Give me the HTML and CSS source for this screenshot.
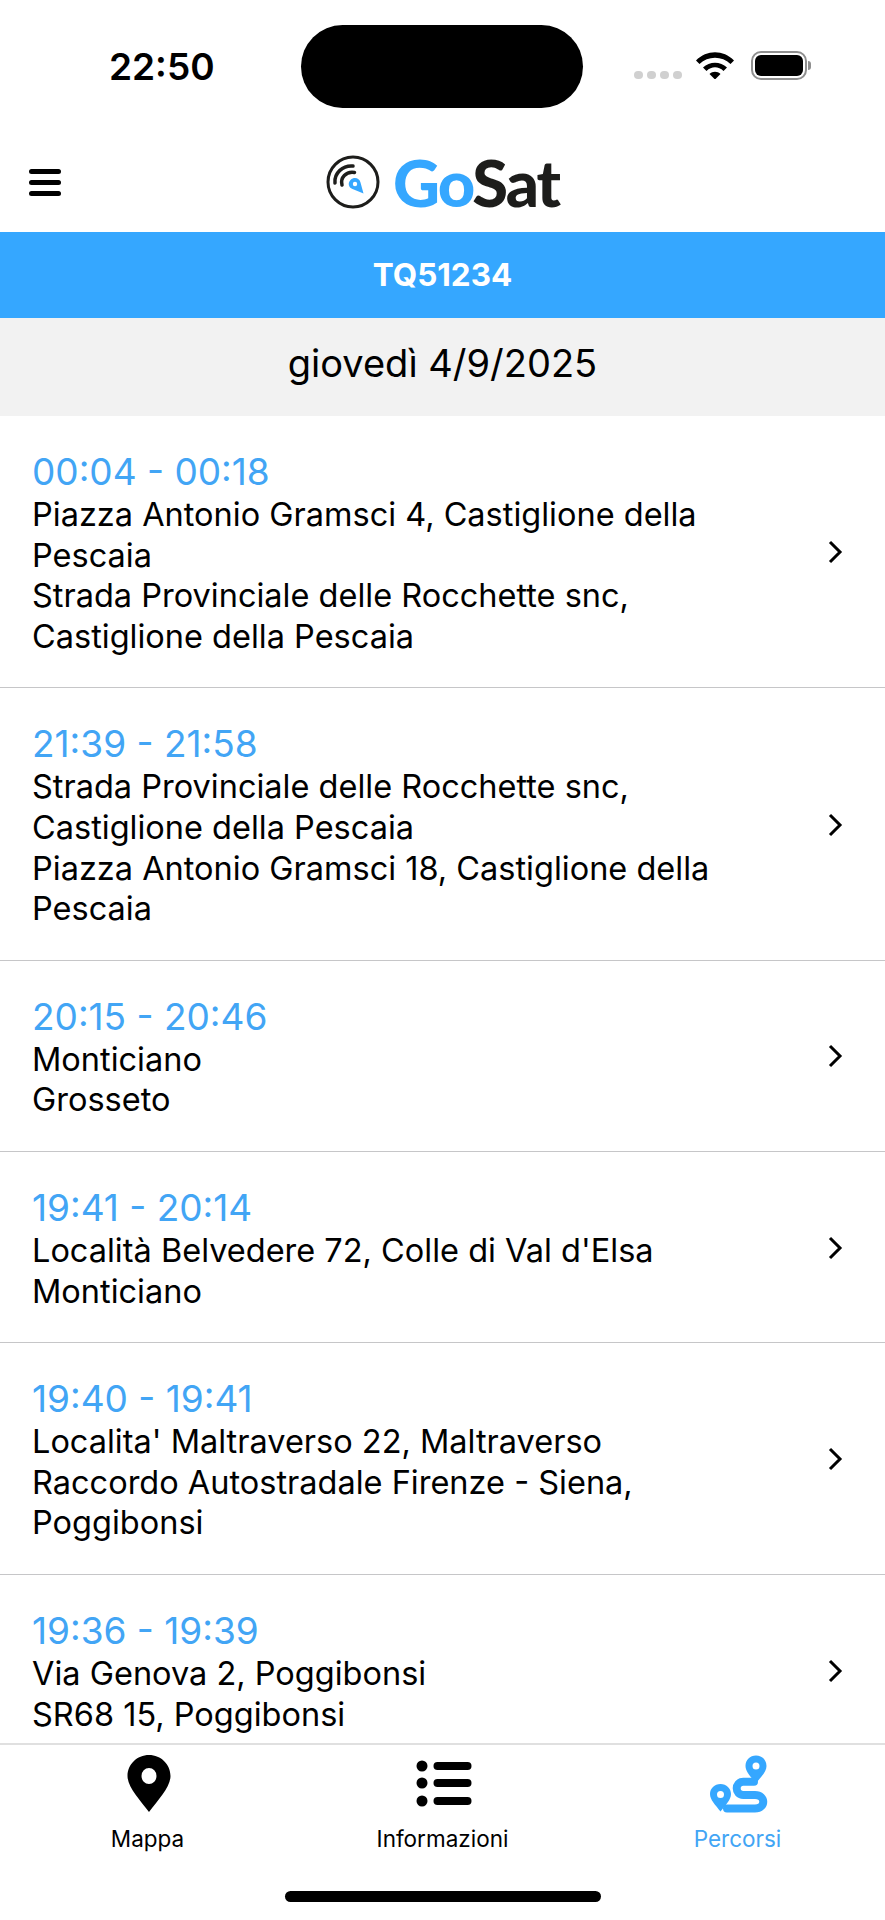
FILE: index.html
```html
<!DOCTYPE html>
<html>
<head>
    <title>GoSat - Percorsi</title>
    <link rel="stylesheet" href="styles.css">
</head>
<body>
    <div id="app">
        <div id="statusBar">
            <div class="clock">22:50</div>
            <div class="island"></div>
            <div class="statusIcons">
                <div class="signal"><span></span><span></span><span></span><span></span></div>
                <svg class="wifi" width="38" height="28" viewBox="0 0 38 28">
                    <path d="M0 9.500C10.500 -1.500 27.500 -1.500 38 9.500L34.500 13C26 4.500 12 4.500 3.500 13Z"/>
                    <path d="M7 16.500C13.500 10 24.500 10 31 16.500L27.500 20C22.500 15 15.500 15 10.500 20Z"/>
                    <path d="M13.500 23C16.500 20 21.500 20 24.500 23L19 28.500Z"/>
                </svg>
                <div class="battery"><div class="batteryFill"></div></div>
                <div class="batteryCap"></div>
            </div>
        </div>

        <div id="header">
            <div class="menuIcon"><span></span><span></span><span></span></div>
            <div class="logo">
                <svg class="logoMark" width="54" height="54" viewBox="0 0 54 54">
                    <circle cx="27" cy="27" r="25" fill="none" stroke="#1d1d1b" stroke-width="3"/>
                    <path d="M9 28C8 18 17 10 27 11" fill="none" stroke="#1d1d1b" stroke-width="3.500" stroke-linecap="round"/>
                    <path d="M16 30C14 23 20 16 28.500 17.500" fill="none" stroke="#1d1d1b" stroke-width="3.500" stroke-linecap="round"/>
                    <path d="M24.500 25C28 21.500 33.500 23 34.500 27.500L37.500 38.500L26.500 34C22.500 32.500 21.500 28 24.500 25Z" fill="#35a7ff"/>
                    <circle cx="29" cy="29" r="2.200" fill="#fff"/>
                </svg>
                <span class="logoText"><span class="go">Go</span>Sat</span>
            </div>
        </div>

        <div id="plateBar">TQ51234</div>
        <div id="dateBar">giovedì 4/9/2025</div>

        <div id="tripList">
            <div class="trip">
                <div class="tripText">
                    <div class="time">00:04 - 00:18</div>
                    <div class="place">Piazza Antonio Gramsci 4, Castiglione della Pescaia</div>
                    <div class="place">Strada Provinciale delle Rocchette snc, Castiglione della Pescaia</div>
                </div>
                <svg class="chevron" width="16" height="24" viewBox="0 0 16 24"><path d="M3 2L13 12L3 22"/></svg>
            </div>
            <div class="trip">
                <div class="tripText">
                    <div class="time">21:39 - 21:58</div>
                    <div class="place">Strada Provinciale delle Rocchette snc, Castiglione della Pescaia</div>
                    <div class="place">Piazza Antonio Gramsci 18, Castiglione della Pescaia</div>
                </div>
                <svg class="chevron" width="16" height="24" viewBox="0 0 16 24"><path d="M3 2L13 12L3 22"/></svg>
            </div>
            <div class="trip">
                <div class="tripText">
                    <div class="time">20:15 - 20:46</div>
                    <div class="place">Monticiano</div>
                    <div class="place">Grosseto</div>
                </div>
                <svg class="chevron" width="16" height="24" viewBox="0 0 16 24"><path d="M3 2L13 12L3 22"/></svg>
            </div>
            <div class="trip">
                <div class="tripText">
                    <div class="time">19:41 - 20:14</div>
                    <div class="place">Località Belvedere 72, Colle di Val d'Elsa</div>
                    <div class="place">Monticiano</div>
                </div>
                <svg class="chevron" width="16" height="24" viewBox="0 0 16 24"><path d="M3 2L13 12L3 22"/></svg>
            </div>
            <div class="trip">
                <div class="tripText">
                    <div class="time">19:40 - 19:41</div>
                    <div class="place">Localita' Maltraverso 22, Maltraverso</div>
                    <div class="place">Raccordo Autostradale Firenze - Siena, Poggibonsi</div>
                </div>
                <svg class="chevron" width="16" height="24" viewBox="0 0 16 24"><path d="M3 2L13 12L3 22"/></svg>
            </div>
            <div class="trip">
                <div class="tripText">
                    <div class="time">19:36 - 19:39</div>
                    <div class="place">Via Genova 2, Poggibonsi</div>
                    <div class="place">SR68 15, Poggibonsi</div>
                </div>
                <svg class="chevron" width="16" height="24" viewBox="0 0 16 24"><path d="M3 2L13 12L3 22"/></svg>
            </div>
        </div>

        <div id="tabBar">
            <div class="tab">
                <svg class="tabIcon" width="64" height="60" viewBox="0 0 64 60">
                    <path fill-rule="evenodd" d="M33 2C45 2 54.500 11.500 54.500 23C54.500 34 42 47 33 59C24 47 11.500 34 11.500 23C11.500 11.500 21 2 33 2ZM33 15A7.500 8 0 1 0 33 31A7.500 8 0 1 0 33 15Z"/>
                </svg>
                <span>Mappa</span>
            </div>
            <div class="tab">
                <svg class="tabIcon" width="64" height="60" viewBox="0 0 64 60">
                    <circle cx="11" cy="13" r="5.500"/>
                    <circle cx="11" cy="30" r="5.500"/>
                    <circle cx="11" cy="48" r="5.500"/>
                    <rect x="22.500" y="9" width="38" height="8" rx="4"/>
                    <rect x="22.500" y="26" width="38" height="8" rx="4"/>
                    <rect x="22.500" y="44" width="38" height="8" rx="4"/>
                </svg>
                <span>Informazioni</span>
            </div>
            <div class="tab active">
                <svg class="tabIcon" width="64" height="60" viewBox="0 0 64 60">
                    <path fill-rule="evenodd" d="M50 2.500C56 2.500 60.500 7 60.500 13C60.500 19 55 24 50 30C45 24 39.500 19 39.500 13C39.500 7 44 2.500 50 2.500ZM50 9.500A3.500 3.500 0 1 0 50 16.500A3.500 3.500 0 1 0 50 9.500Z"/>
                    <path fill-rule="evenodd" d="M14.500 31C20.500 31 25 35.500 25 41C25 47 19.500 52 14.500 58.500C9.500 52 4 47 4 41C4 35.500 8.500 31 14.500 31ZM14.500 38A3.500 3.500 0 1 0 14.500 45A3.500 3.500 0 1 0 14.500 38Z"/>
                    <path class="routeLine" d="M48 28.700H37.300C28.500 28.700 28.500 42 37.300 42H49C60 42 60 55.500 49 55.500H21"/>
                </svg>
                <span>Percorsi</span>
            </div>
        </div>

        <div id="homeArea"><div class="homeBar"></div></div>
    </div>
</body>
</html>
```

FILE: styles.css
```css
html, body {
    padding: 0;
    margin: 0;
    font-family: Inter, "Liberation Sans", sans-serif;
    background: white;
}
#app {
    width: 885px;
    height: 1920px;
    display: flex;
    flex-direction: column;
    overflow: hidden;
}

/* status bar */
#statusBar {
    height: 133px;
    flex-shrink: 0;
    box-sizing: border-box;
    padding: 25px 0 0 109px;
    display: flex;
    flex-direction: row;
    align-items: flex-start;
}
.clock {
    width: 105px;
    margin-top: 21px;
    font-size: 37px;
    line-height: 42px;
    font-weight: 600;
    color: black;
    white-space: nowrap;
}
.island {
    width: 282px;
    height: 83px;
    margin-left: 87px;
    border-radius: 42px;
    background: black;
}
.statusIcons {
    display: flex;
    flex-direction: row;
    align-items: flex-end;
    margin: 26px 0 0 51px;
}
.signal {
    display: flex;
    gap: 4px;
    margin-bottom: 1px;
}
.signal span {
    width: 9px;
    height: 8px;
    border-radius: 4px;
    background: #d0d0d0;
}
.wifi {
    margin-left: 14px;
    margin-bottom: 1px;
}
.battery {
    width: 56px;
    height: 29px;
    margin-left: 17px;
    box-sizing: border-box;
    border: 2px solid #8f8f8f;
    border-radius: 10px;
    padding: 2px;
}
.batteryFill {
    height: 100%;
    background: black;
    border-radius: 6px;
}
.batteryCap {
    width: 3px;
    height: 9px;
    margin: 0 0 10px 1px;
    background: #8f8f8f;
    border-radius: 0 3px 3px 0;
}

/* header */
#header {
    height: 99px;
    flex-shrink: 0;
    display: flex;
    align-items: center;
    padding: 0 0 0 29px;
}
.menuIcon {
    width: 32px;
    display: flex;
    flex-direction: column;
    gap: 6px;
}
.menuIcon span {
    height: 5px;
    background: black;
    border-radius: 3px;
}
.logo {
    display: flex;
    align-items: center;
    gap: 13px;
    margin: -2px 0 0 265px;
}
.logoMark {
    display: block;
}
.logoText {
    font-family: Lato, sans-serif;
    font-weight: 900;
    font-size: 65px;
    line-height: 60px;
    letter-spacing: -2px;
    color: #1d1d1b;
}
.go {
    color: #35a7ff;
}

/* bars */
#plateBar {
    height: 86px;
    flex-shrink: 0;
    box-sizing: border-box;
    padding-bottom: 2px;
    background: #35a7ff;
    color: white;
    font-size: 31.500px;
    font-weight: 700;
    display: flex;
    align-items: center;
    justify-content: center;
}
#dateBar {
    height: 98px;
    flex-shrink: 0;
    box-sizing: border-box;
    padding-bottom: 8px;
    background: #f2f2f2;
    color: black;
    font-size: 38px;
    display: flex;
    align-items: center;
    justify-content: center;
}

/* list */
#tripList {
    flex: 1;
    min-height: 0;
    overflow: hidden;
}
.trip {
    box-sizing: border-box;
    padding: 33px 42px 30px 32px;
    border-bottom: 1px solid #c6c6c8;
    display: flex;
    flex-direction: row;
    align-items: center;
}
.tripText {
    flex: 1;
    padding-right: 90px;
}
.time {
    font-size: 37px;
    line-height: 46px;
    color: #42a5f5;
}
.place {
    font-size: 32.500px;
    line-height: 40.600px;
    color: black;
}
.chevron {
    flex-shrink: 0;
    margin-bottom: 2px;
}
.chevron path {
    fill: none;
    stroke: black;
    stroke-width: 3;
}

/* tab bar */
#tabBar {
    height: 112px;
    flex-shrink: 0;
    box-sizing: border-box;
    border-top: 2px solid #e0e0e0;
    background: white;
    display: flex;
    flex-direction: row;
}
.tab {
    flex: 1;
    display: flex;
    flex-direction: column;
    align-items: center;
    font-size: 22.500px;
    line-height: 26px;
    color: black;
    padding-top: 8px;
}
.tabIcon {
    display: block;
    margin-bottom: 13px;
    fill: black;
}
.tab.active {
    color: #42a5f5;
}
.tab.active .tabIcon {
    fill: #35a7ff;
}
.routeLine {
    fill: none;
    stroke: #35a7ff;
    stroke-width: 8;
    stroke-linecap: round;
}
#homeArea {
    height: 65px;
    flex-shrink: 0;
    display: flex;
    justify-content: center;
    padding-top: 36px;
    box-sizing: border-box;
    background: white;
}
.homeBar {
    width: 316px;
    height: 11px;
    background: black;
    border-radius: 6px;
}
```
